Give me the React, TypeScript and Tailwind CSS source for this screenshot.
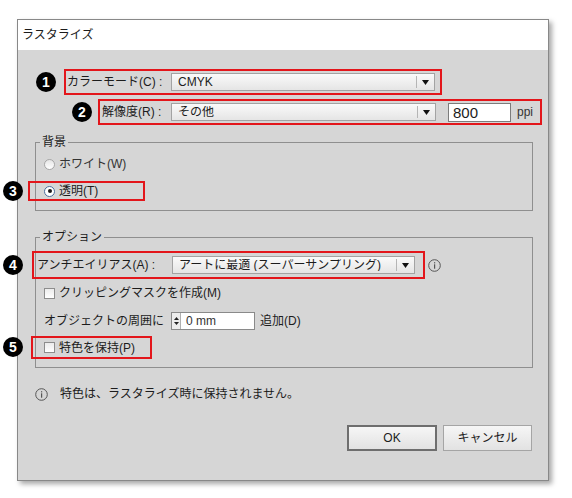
import React from 'react';

const font = { fontFamily: '"Liberation Sans", "Noto Sans CJK JP", sans-serif' };

const Marker = ({ n, className }: { n: number; className: string }) => (
  <span
    className={`absolute flex h-[20px] w-[20px] items-center justify-center rounded-full bg-black text-[14px] font-bold leading-none text-white ${className}`}
  >
    {n}
  </span>
);

const Dropdown = ({ value, width }: { value: string; width: string }) => (
  <div
    className={`flex h-[18px] items-center border border-[#a3a3a3] bg-gradient-to-b from-[#fafafa] to-[#e5e5e5] ${width}`}
  >
    <span className="flex-1 truncate pl-[6px] text-[12px] leading-none">{value}</span>
    <span className="h-[12px] w-px bg-[#b5b5b5]" />
    <span className="flex w-[17px] items-center justify-center">
      <svg width="7" height="5" viewBox="0 0 7 5">
        <path d="M0 0h7L3.5 5z" fill="#111" />
      </svg>
    </span>
  </div>
);

const InfoIcon = () => (
  <svg width="13" height="13" viewBox="0 0 13 13">
    <circle cx="6.5" cy="6.5" r="5.8" fill="none" stroke="#555" strokeWidth="1" />
    <rect x="6" y="5.3" width="1.2" height="4.4" fill="#555" />
    <rect x="6" y="3.2" width="1.2" height="1.2" fill="#555" />
  </svg>
);

const Checkbox = () => (
  <span className="h-[11px] w-[11px] border border-[#8d8d8d] bg-gradient-to-b from-[#ececec] to-white" />
);

export default function App() {
  return (
    <div className="h-[498px] w-[572px] bg-white pl-[17px] pt-[19px] text-[#1c1c1c]" style={font}>
      <div className="flex h-[462px] w-[532px] flex-col border border-[#888] shadow-[3px_3px_5px_rgba(0,0,0,0.35)]">
        <div className="flex h-[30px] items-center bg-white pl-[4px] text-[12px]">ラスタライズ</div>

        <div className="flex flex-1 flex-col bg-[#d6d6d6] text-[12px] leading-[16px]">
          {/* カラーモード */}
          <div className="relative ml-[46px] mt-[19px] flex h-[26px] w-[378px] items-center border-2 border-[#e3161b]">
            <Marker n={1} className="left-[-30px] top-[1px]" />
            <span className="w-[105px] pl-[1px]">カラーモード(C) :</span>
            <Dropdown value="CMYK" width="w-[264px]" />
          </div>

          {/* 解像度 */}
          <div className="relative ml-[80px] mt-[4px] flex h-[26px] w-[444px] items-center border-2 border-[#e3161b]">
            <Marker n={2} className="left-[-28px] top-[1px]" />
            <span className="w-[71px] pl-[2px]">解像度(R) :</span>
            <Dropdown value="その他" width="w-[265px]" />
            <div className="ml-[12px] flex h-[19px] w-[63px] items-center border border-[#7c7c7c] bg-white pl-[4px] text-[15px] leading-none">
              800
            </div>
            <span className="ml-[6px] text-[12px] text-[#333]">ppi</span>
          </div>

          {/* 背景 */}
          <fieldset className="ml-[17px] mt-[9px] w-[498px] border border-[#8f8f8f] pb-[9px]">
            <legend className="ml-[4px] px-[2px] leading-[16px]">背景</legend>
            <div className="mt-[6px] flex h-[16px] items-center pl-[8px]">
              <span className="h-[11px] w-[11px] rounded-full border border-[#a7a7a7] bg-gradient-to-b from-[#e6e6e6] to-white" />
              <span className="ml-[4px] text-[#333]">ホワイト(W)</span>
            </div>
            <div className="relative ml-[-8px] mt-[9px] flex h-[20px] w-[117px] items-center border-2 border-[#e3161b] pl-[14px]">
              <Marker n={3} className="left-[-27px] top-[-2px]" />
              <span className="flex h-[11px] w-[11px] items-center justify-center rounded-full border border-[#4d6e9c] bg-white">
                <span className="h-[4px] w-[4px] rounded-full bg-[#1a1a1a]" />
              </span>
              <span className="ml-[4px]">透明(T)</span>
            </div>
          </fieldset>

          {/* オプション */}
          <fieldset className="ml-[17px] mt-[18px] w-[498px] border border-[#8f8f8f] pb-[8px]">
            <legend className="ml-[4px] px-[2px] leading-[16px]">オプション</legend>
            <div className="mt-[6px] ml-[-4px] flex items-center">
              <div className="relative flex h-[28px] w-[393px] items-center border-2 border-[#e3161b]">
                <Marker n={4} className="left-[-31px] top-[2px]" />
                <span className="w-[138px] pl-[3px]">アンチエイリアス(A) :</span>
                <Dropdown value="アートに最適 (スーパーサンプリング)" width="w-[243px]" />
              </div>
              <span className="ml-[3px] flex">
                <InfoIcon />
              </span>
            </div>
            <div className="mt-[6px] flex h-[16px] items-center pl-[8px]">
              <Checkbox />
              <span className="ml-[4px]">クリッピングマスクを作成(M)</span>
            </div>
            <div className="mt-[11px] flex h-[18px] items-center pl-[8px]">
              <span>オブジェクトの周囲に</span>
              <div className="ml-[7px] flex h-[18px] w-[84px] items-center border border-[#8a8a8a] bg-white">
                <span className="flex h-full w-[9px] flex-col items-center justify-center gap-[2px] border-r border-[#b0b0b0] bg-[#ececec]">
                  <svg width="5" height="3" viewBox="0 0 5 3">
                    <path d="M0 3h5L2.5 0z" fill="#222" />
                  </svg>
                  <svg width="5" height="3" viewBox="0 0 5 3">
                    <path d="M0 0h5L2.5 3z" fill="#222" />
                  </svg>
                </span>
                <span className="ml-[5px] text-[12px] text-[#333]">0 mm</span>
              </div>
              <span className="ml-[5px]">追加(D)</span>
            </div>
            <div className="relative ml-[-5px] mt-[6px] flex h-[23px] w-[121px] items-center border-2 border-[#e3161b] pl-[11px]">
              <Marker n={5} className="left-[-30px] top-[-1px]" />
              <Checkbox />
              <span className="ml-[4px]">特色を保持(P)</span>
            </div>
          </fieldset>

          {/* 情報 */}
          <div className="ml-[17px] mt-[18px] flex h-[16px] items-center">
            <InfoIcon />
            <span className="ml-[12px]">特色は、ラスタライズ時に保持されません。</span>
          </div>

          {/* ボタン */}
          <div className="ml-[329px] mt-[23px] flex gap-[6px]">
            <button className="flex h-[26px] w-[90px] items-center justify-center border-2 border-[#6e6e6e] bg-gradient-to-b from-[#f6f6f6] to-[#e2e2e2] text-[12px]">
              OK
            </button>
            <button className="flex h-[26px] w-[89px] items-center justify-center border border-[#a5a5a5] bg-gradient-to-b from-[#f6f6f6] to-[#e2e2e2] text-[12px]">
              キャンセル
            </button>
          </div>
        </div>
      </div>
    </div>
  );
}
